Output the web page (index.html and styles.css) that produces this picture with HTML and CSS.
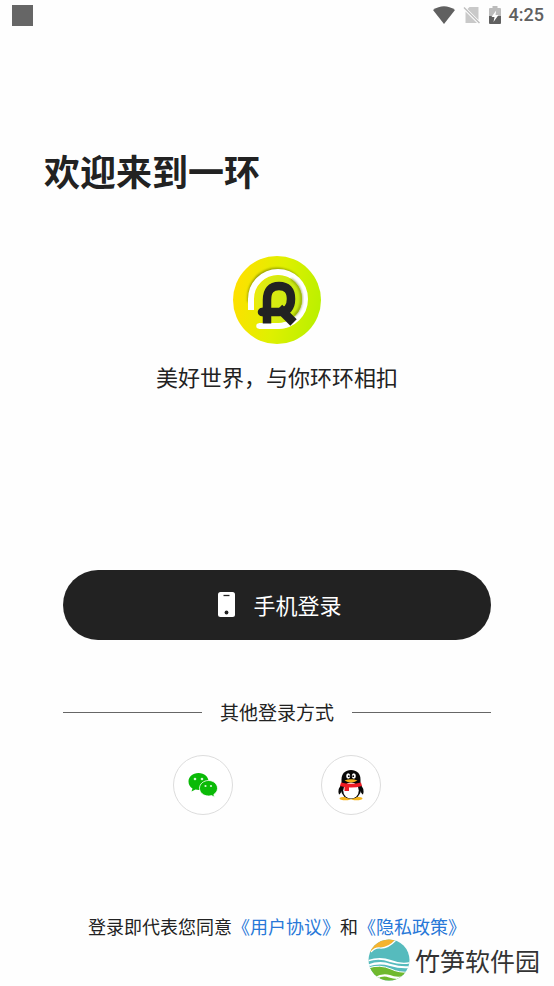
FILE: index.html
```html
<!DOCTYPE html>
<html lang="zh-CN">
<head>
<meta charset="utf-8">
<meta name="viewport" content="width=device-width, initial-scale=1">
<title>登录</title>
<link rel="stylesheet" href="styles.css">
</head>
<body>
<div class="page">
  <header class="status">
    <span class="status-app"></span>
    <div class="status-icons">
      <svg width="22" height="18" viewBox="0 0 22 18" aria-hidden="true"><path d="M0 4Q11-3.500 22 4L11 18Z" fill="#606060"/></svg>
      <svg width="18" height="18" viewBox="0 0 18 18" aria-hidden="true"><path d="M6.500 1H15.500V14L4.500 3ZM2.500 5.500L14 17H2.500Z" fill="#c9c9c9"/><path d="M1 1.500L16.500 17" stroke="#c0c0c0" stroke-width="1.500"/></svg>
      <svg width="12" height="18" viewBox="0 0 12 18" aria-hidden="true"><path d="M0 3Q0 2 1 2H3.500V0H8.500V2H11Q12 2 12 3V10H0Z" fill="#bcbcbc"/><path d="M0 10H12V17Q12 18 11 18H1Q0 18 0 17Z" fill="#606060"/><path d="M7.200 4.500L2.500 11H5.500L4.500 16L9.500 9H6.500Z" fill="#fff"/></svg>
      <time class="clock">4:25</time>
    </div>
  </header>

  <main>
    <h1>欢迎来到一环</h1>

    <section class="brand">
      <svg class="logo" viewBox="0 0 88 88" role="img" aria-label="一环">
        <defs>
          <linearGradient id="disc" x1="0" y1="0.400" x2="1" y2="0.600"><stop offset="0" stop-color="#ffe000"/><stop offset="0.500" stop-color="#dff000"/><stop offset="1" stop-color="#baf000"/></linearGradient>
          <linearGradient id="ring" x1="0" y1="0" x2="1" y2="0"><stop offset="0" stop-color="#e6ec10"/><stop offset="1" stop-color="#c4e812"/></linearGradient>
          <filter id="shade" x="-20%" y="-20%" width="140%" height="140%"><feGaussianBlur stdDeviation="0.900"/></filter>
        </defs>
        <circle cx="44" cy="44" r="44" fill="url(#disc)"/>
        <path d="M16.500 46V42A27.500 27.500 0 0 1 64 22.500" fill="none" stroke="#657300" stroke-width="4" opacity=".65" filter="url(#shade)"/>
        <path d="M18 54V43A27 27 0 1 1 45 70H26" fill="none" stroke="#fff" stroke-width="6"/>
        <path d="M25 67H45" stroke="#657300" stroke-width="2" opacity=".75" filter="url(#shade)"/>
        <circle cx="45.500" cy="43" r="23.500" fill="url(#ring)"/>
        <path d="M61 60A23.500 23.500 0 0 0 58 23" fill="none" stroke="#657300" stroke-width="2" opacity=".65" filter="url(#shade)"/>
        <path d="M26 70H45Q54 70 60 65" fill="none" stroke="#fff" stroke-width="5.500" stroke-linecap="round"/>
        <path d="M34 67.500V44Q34 30 46 30Q58 30 58 43Q58 56 46 56H29" fill="none" stroke="#222" stroke-width="8.500"/>
        <circle cx="29" cy="56" r="4.250" fill="#222"/>
        <path d="M46 52L60.500 66.500" stroke="#222" stroke-width="9"/>
      </svg>
      <p>美好世界，与你环环相扣</p>
    </section>

    <button class="phone-login" type="button">
      <svg width="17" height="25" viewBox="0 0 17 25" aria-hidden="true"><rect width="17" height="25" rx="2.500" fill="#fff"/><path d="M5.500 3.500H11.500" stroke="#222" stroke-width="1.300"/><circle cx="8.500" cy="20.500" r="1.900" fill="#222"/></svg>
      <span>手机登录</span>
    </button>

    <div class="divider"><span>其他登录方式</span></div>

    <div class="providers">
      <button type="button" aria-label="微信登录">
        <svg width="30" height="26" viewBox="0 0 30 26" aria-hidden="true">
          <path d="M10.500 1C4.700 1 .5 4.700 .5 9.500C.5 12.500 2 15 4.500 16.500L3.500 19.500L7.500 17.600Q9 18 11 18C16.500 18 20.500 14.300 20.500 9.500S16.500 1 10.500 1Z" fill="#0aba07"/>
          <path d="M20.500 8.500C15.500 8.500 11.500 12 11.500 16.300S15.500 24 20.500 24Q22 24 23.500 23.500L26.500 25.200L25.800 22.500C28 21 29.500 19 29.500 16.300C29.500 12 25.500 8.500 20.500 8.500Z" fill="#0aba07" stroke="#fff" stroke-width=".8"/>
          <g fill="#d8f5d8"><circle cx="7" cy="7" r="1.300"/><circle cx="14" cy="7" r="1.300"/><circle cx="17.500" cy="14" r="1.100"/><circle cx="23" cy="14" r="1.100"/></g>
        </svg>
      </button>
      <button type="button" aria-label="QQ登录">
        <svg width="26" height="32" viewBox="0 0 26 32" aria-hidden="true">
          <ellipse cx="7.500" cy="29.500" rx="6" ry="1.800" fill="#f5b51c"/><ellipse cx="18.500" cy="29.500" rx="6" ry="1.800" fill="#f5b51c"/>
          <path d="M4 14L.7 20Q0 23 1 25.500Q2 25.500 4 21.500ZM22 14L25.300 20Q26 23 25 25.500Q24 25.500 22 21.500Z" fill="#080808"/>
          <ellipse cx="13" cy="20.500" rx="10" ry="9.500" fill="#080808"/>
          <path d="M3.500 14V10.500C3.500 4.500 7.500 1 13 1S22.500 4.500 22.500 10.500V14Q13 18 3.500 14Z" fill="#080808"/>
          <ellipse cx="13" cy="21.500" rx="7.800" ry="8" fill="#fff"/>
          <path d="M3 13.500Q13 16 23 13.500L24 17Q13 20 2 17Z" fill="#ed1c24"/>
          <path d="M6.500 17H11V22H6.500Z" fill="#ed1c24"/>
          <ellipse cx="10.200" cy="7" rx="2" ry="2.700" fill="#fff"/><ellipse cx="15.800" cy="7" rx="2" ry="2.700" fill="#fff"/>
          <circle cx="10.800" cy="7.200" r=".9"/><circle cx="15.200" cy="7.200" r=".9"/>
          <path d="M6.500 11.500Q13 9 19.500 11.500Q13 15.500 6.500 11.500Z" fill="#f5b51c"/>
        </svg>
      </button>
    </div>

    <p class="terms">登录即代表您同意<a href="#terms">《用户协议》</a>和<a href="#privacy">《隐私政策》</a></p>
  </main>

  <footer class="site">
    <svg width="42" height="42" viewBox="0 0 42 42" aria-hidden="true">
      <defs><clipPath id="globe"><circle cx="21" cy="21" r="20.500"/></clipPath></defs>
      <g clip-path="url(#globe)">
        <path d="M0 0H42V42H0Z" fill="#56bbbd"/>
        <path d="M0 0H28Q24 4 21 6.500Q16 9 10 8.500Q6 9 3 13H0Z" fill="#f5b32f"/>
        <path d="M3 13Q7 8.500 12 9Q20 9.500 28 1" fill="none" stroke="#fff" stroke-width="1.200"/>
        <path d="M0 21Q12 17 23 21Q33 25 42 23V24.500Q32 26 22 23Q11 19 0 22.500Z" fill="#fff"/>
        <path d="M0 25.500Q12 21 23 25Q33 28 42 27V29Q32 30 22 27Q11 24 0 27.500Z" fill="#fff"/>
        <path d="M0 29Q12 25 23 30Q31 34 42 33V42H0Z" fill="#70b92e"/>
        <path d="M0 29Q12 25 23 30Q31 34 42 33" fill="none" stroke="#fff" stroke-width="1"/>
        <path d="M7 38Q14 34 22 36Q28 39 37 37V39Q28 41 21 38.500Q15 36 9 40Z" fill="#fff"/>
      </g>
    </svg>
    <span>竹笋软件园</span>
  </footer>
</div>
</body>
</html>
```
FILE: styles.css
```css
* {
  box-sizing: border-box;
}

body {
  margin: 0;
  background: #fefefe;
  color: #222;
  font-family: "Noto Sans CJK SC", sans-serif;
}

h1,
p {
  margin: 0;
}

button {
  font: inherit;
  padding: 0;
  cursor: pointer;
}

svg {
  display: block;
  flex: none;
}

.page {
  min-height: 100vh;
  display: flex;
  flex-direction: column;
}

.status {
  display: flex;
  align-items: center;
  justify-content: space-between;
  height: 30px;
  padding: 0 10px 0 12px;
}

.status-app {
  width: 21px;
  height: 21px;
  background: #666;
}

.status-icons {
  display: flex;
  align-items: center;
  gap: 8px;
}

.clock {
  color: #606060;
  font: 500 18px/20px Roboto, sans-serif;
}

main {
  padding: 114px 44px 0;
}

h1 {
  font-size: 36px;
  font-weight: 700;
  line-height: 52px;
}

.brand {
  display: flex;
  flex-direction: column;
  align-items: center;
  gap: 16px;
  margin-top: 60px;
  font-size: 22px;
  line-height: 32px;
}

.logo {
  width: 88px;
  height: 88px;
}

.phone-login {
  display: flex;
  align-items: center;
  justify-content: center;
  gap: 18px;
  width: calc(100% - 38px);
  height: 70px;
  margin: 178px auto 0;
  padding: 0 0 2px 6px;
  border: 0;
  border-radius: 35px;
  background: #222;
  color: #fff;
  font-size: 22px;
}

.divider {
  display: flex;
  align-items: center;
  gap: 18px;
  margin: 58px 19px 0;
  font-size: 19px;
  line-height: 28px;
}

.divider::before,
.divider::after {
  content: "";
  flex: 1;
  height: 1px;
  background: #666;
}

.providers {
  display: flex;
  justify-content: center;
  gap: 88px;
  margin-top: 29px;
}

.providers button {
  display: grid;
  place-items: center;
  width: 60px;
  height: 60px;
  border: 1px solid #ddd;
  border-radius: 50%;
  background: #fff;
}

.terms {
  margin-top: 98px;
  font-size: 18px;
  line-height: 26px;
  text-align: center;
  white-space: nowrap;
}

.terms a {
  color: #2878d8;
  text-decoration: none;
}

.site {
  display: flex;
  align-items: center;
  justify-content: flex-end;
  gap: 5px;
  padding-right: 14px;
  color: #333;
  font-size: 25px;
  line-height: 40px;
}
```
